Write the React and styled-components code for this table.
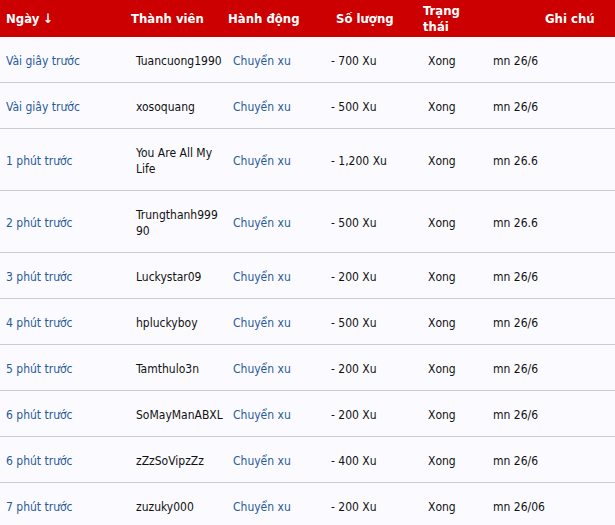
import React from "react";
import styled, { createGlobalStyle } from "styled-components";

const GlobalStyle = createGlobalStyle`
  html, body {
    margin: 0;
    padding: 0;
    background: #fbfbff;
  }
  body {
    font-family: "DejaVu Sans Condensed", "DejaVu Sans", sans-serif;
    font-stretch: condensed;
  }
`;

const Table = styled.table`
  width: 615px;
  table-layout: fixed;
  border-collapse: collapse;
  font-size: 12px;
  color: #111;
`;

const HeadRow = styled.tr`
  background: #cc0000;
  height: 37px;
`;

const Th = styled.th`
  color: #fff;
  font-size: 13px;
  font-weight: bold;
  line-height: 16px;
  text-align: left;
  vertical-align: middle;
  padding: 2px 0 2px ${(p) => p.$pad || 0}px;
  white-space: ${(p) => (p.$wrap ? "normal" : "nowrap")};
`;

const Row = styled.tr`
  border-bottom: 1px solid #cccccc;
`;

const Td = styled.td`
  padding: 16px 4px 13px 6px;
  line-height: 16px;
  vertical-align: middle;
  overflow-wrap: anywhere;
  color: ${(p) => (p.$link ? "#285a9a" : "#111")};
`;

const rows = [
  ["Vài giây trước", "Tuancuong1990", "- 700 Xu", "mn 26/6"],
  ["Vài giây trước", "xosoquang", "- 500 Xu", "mn 26/6"],
  ["1 phút trước", "You Are All My Life", "- 1,200 Xu", "mn 26.6"],
  ["2 phút trước", "Trungthanh99990", "- 500 Xu", "mn 26.6"],
  ["3 phút trước", "Luckystar09", "- 200 Xu", "mn 26/6"],
  ["4 phút trước", "hpluckyboy", "- 500 Xu", "mn 26/6"],
  ["5 phút trước", "Tamthulo3n", "- 200 Xu", "mn 26/6"],
  ["6 phút trước", "SoMayManABXL", "- 200 Xu", "mn 26/6"],
  ["6 phút trước", "zZzSoVipzZz", "- 400 Xu", "mn 26/6"],
  ["7 phút trước", "zuzuky000", "- 200 Xu", "mn 26/06"],
];

export default function App() {
  return (
    <>
      <GlobalStyle />
      <Table>
        <colgroup>
          <col style={{ width: 130 }} />
          <col style={{ width: 97 }} />
          <col style={{ width: 98 }} />
          <col style={{ width: 97 }} />
          <col style={{ width: 65 }} />
          <col style={{ width: 128 }} />
        </colgroup>
        <thead>
          <HeadRow>
            <Th $pad={6}>Ngày ↓</Th>
            <Th $pad={1}>Thành viên</Th>
            <Th $pad={1}>Hành động</Th>
            <Th $pad={11}>Số lượng</Th>
            <Th $pad={1} $wrap>Trạng thái</Th>
            <Th $pad={58}>Ghi chú</Th>
          </HeadRow>
        </thead>
        <tbody>
          {rows.map(([time, user, amount, note], i) => (
            <Row key={i}>
              <Td $link>{time}</Td>
              <Td>{user}</Td>
              <Td $link>Chuyển xu</Td>
              <Td>{amount}</Td>
              <Td>Xong</Td>
              <Td>{note}</Td>
            </Row>
          ))}
        </tbody>
      </Table>
    </>
  );
}
